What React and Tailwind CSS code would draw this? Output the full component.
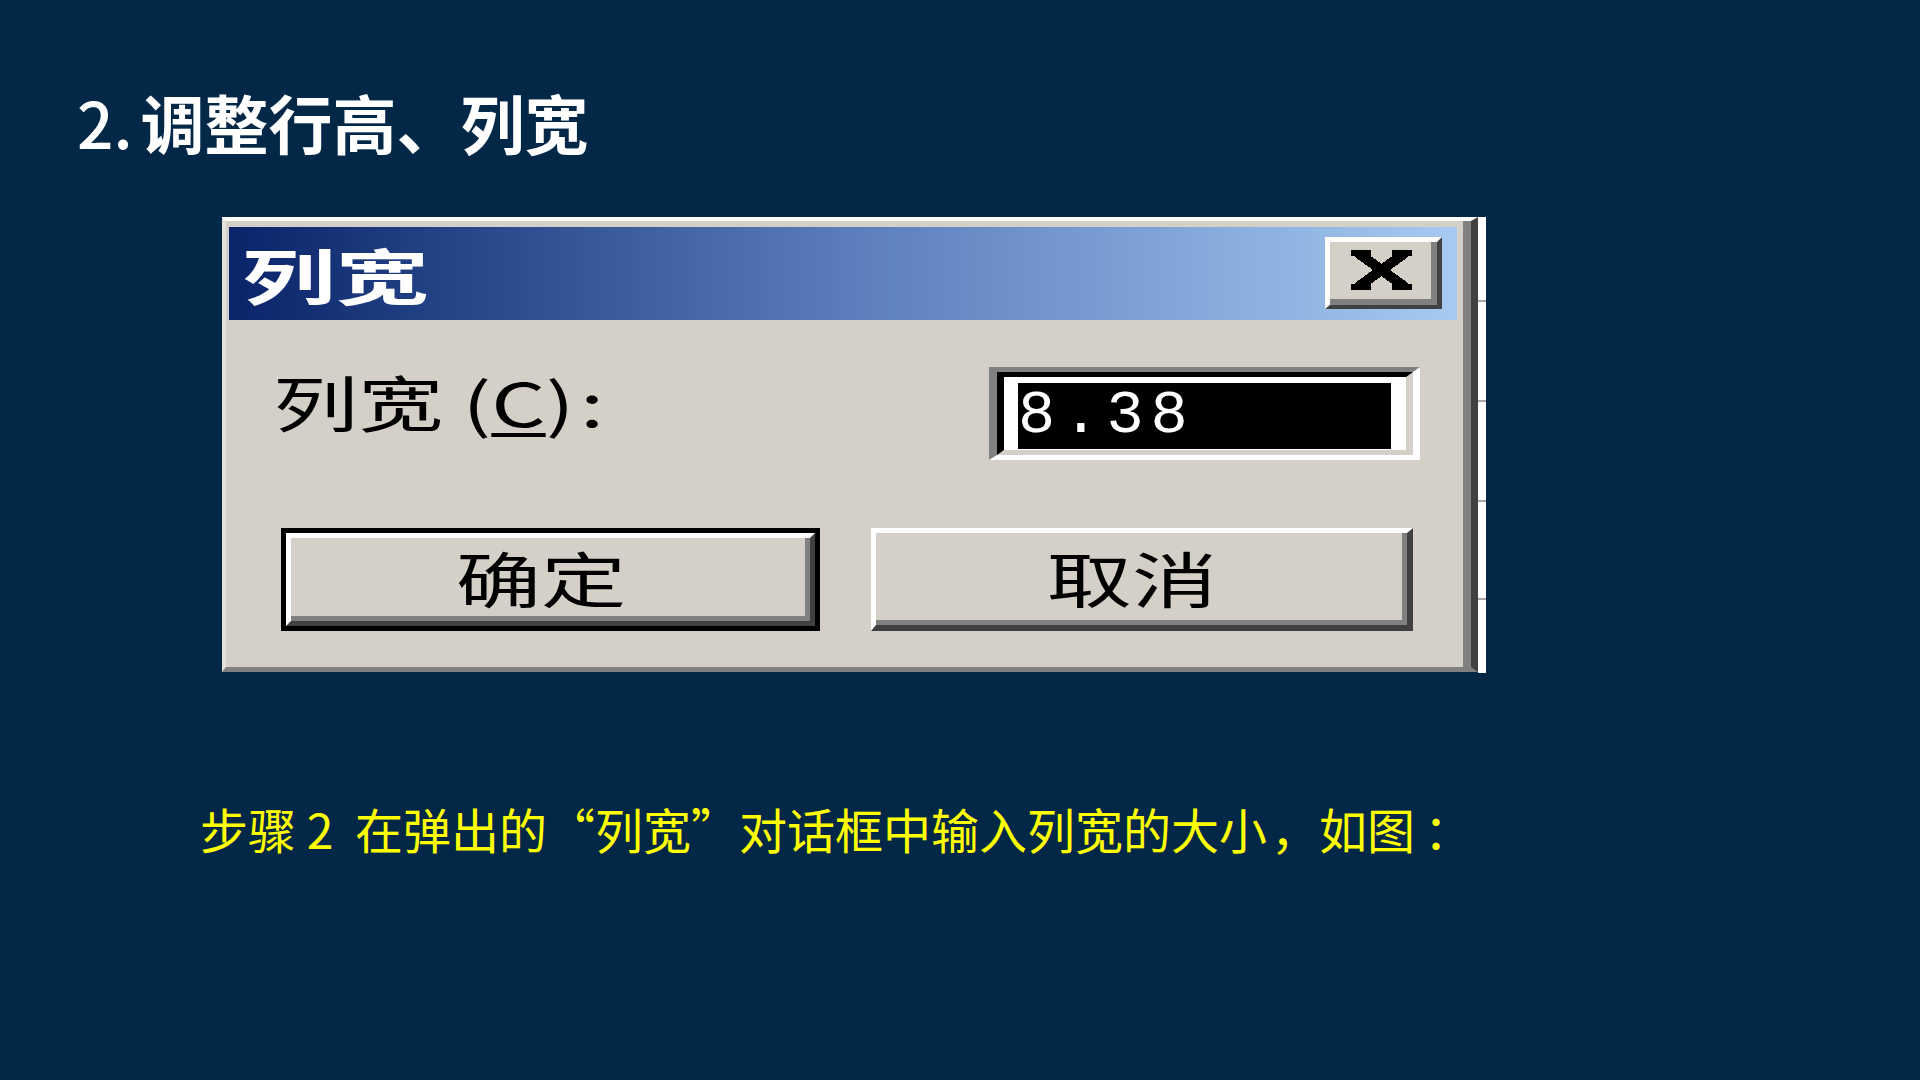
import React from 'react';

const CloseGlyph = () => (
  <svg width="61" height="40" viewBox="0 0 61 40" shapeRendering="crispEdges">
    <path d="M7 3 L54 37 M54 3 L7 37" stroke="#000" strokeWidth="10" fill="none" />
    <rect x="0" y="0" width="20" height="6" fill="#000" />
    <rect x="41" y="0" width="20" height="6" fill="#000" />
    <rect x="0" y="34" width="20" height="6" fill="#000" />
    <rect x="41" y="34" width="20" height="6" fill="#000" />
  </svg>
);

const App = () => {
  return (
    <div
      lang="zh-CN"
      className="w-[1920px] h-[1080px] bg-[#022747] flex flex-col font-['Noto_Sans_CJK_SC',sans-serif] overflow-hidden"
    >
      {/* slide title */}
      <div className="pt-[89px] pl-[77px] flex items-start text-white font-bold text-[64px] leading-none">
        <span className="font-medium">2.</span>
        <span className="ml-[8px]">调整行高、列宽</span>
      </div>

      {/* dialog screenshot */}
      <div className="mt-[64px] ml-[222px] flex">
        <div className="w-[1256px] h-[455px] bg-[#d4d0c8] border-t-4 border-l-4 border-r-[7px] border-b-[5px] border-t-white border-l-[#e4e1db] border-r-[#404040] border-b-[#808080]">
          <div className="h-full border-r-8 border-r-[#808080] pt-[6px] pl-[3px] pr-[6px] flex flex-col">
            {/* title bar */}
            <div className="h-[93px] bg-gradient-to-r from-[#0a246a] via-[#5a7cbc] to-[#a6caf0] flex items-center justify-between pl-[13px] pr-[15px]">
              <span className="inline-block origin-left scale-x-[1.56] text-white font-bold text-[60px] leading-none">
                列宽
              </span>
              <div className="w-[117px] h-[72px] mb-[2px] border-t-[5px] border-l-[5px] border-r-[5px] border-b-[4px] border-t-white border-l-white border-r-[#404040] border-b-[#404040]">
                <div className="w-full h-full bg-[#d4d0c8] border-r-[6px] border-b-[6px] border-[#808080] flex items-center justify-center pl-[2px]">
                  <CloseGlyph />
                </div>
              </div>
            </div>

            {/* label + input */}
            <div className="mt-[47px] flex items-start justify-between pl-[44px] pr-[37px]">
              <span className="mt-[4px] inline-block origin-left scale-x-[1.42] text-black text-[60px] leading-none">
                列宽 (<span className="underline underline-offset-[6px] decoration-[4px]">C</span>)<span className="ml-[4px]">:</span>
              </span>
              <div className="w-[431px] h-[93px] border-t-[5px] border-l-8 border-b-[5px] border-r-[7px] border-t-[#808080] border-l-[#808080] border-b-white border-r-white">
                <div className="w-full h-full border-t-[5px] border-l-[7px] border-b-[5px] border-r-[7px] border-t-black border-l-black border-b-[#d4d0c8] border-r-[#d4d0c8]">
                  <div className="w-full h-full bg-white pt-[6px] pl-[14px] pr-[15px] pb-[1px]">
                    <div className="w-full h-full bg-black flex items-center">
                      <span className="text-white font-['Liberation_Mono',monospace] text-[62px] leading-none tracking-[7px]">
                        8.38
                      </span>
                    </div>
                  </div>
                </div>
              </div>
            </div>

            {/* buttons */}
            <div className="mt-[68px] flex pl-[52px] pr-[44px] justify-between">
              <div className="w-[539px] h-[103px] border-[5px] border-black">
                <div className="w-full h-full border-[5px] border-t-white border-l-white border-r-[#404040] border-b-[#404040]">
                  <div className="w-full h-full border-r-[5px] border-b-[5px] border-[#808080] flex items-center justify-center pr-[14px]">
                    <span className="inline-block scale-x-[1.42] text-black text-[60px] leading-none">确定</span>
                  </div>
                </div>
              </div>
              <div className="w-[542px] h-[103px] border-t-[5px] border-l-[5px] border-r-[6px] border-b-[6px] border-t-white border-l-white border-r-[#404040] border-b-[#404040]">
                <div className="w-full h-full border-r-[5px] border-b-[5px] border-[#808080] flex items-center justify-center pr-[14px]">
                  <span className="inline-block scale-x-[1.42] text-black text-[60px] leading-none">取消</span>
                </div>
              </div>
            </div>
          </div>
        </div>

        {/* sliver of the sheet behind the dialog */}
        <div className="w-[8px] h-[456px] bg-white flex flex-col">
          <div className="mt-[83px] h-[2px] bg-[#a8a8a8]" />
          <div className="mt-[98px] h-[2px] bg-[#a8a8a8]" />
          <div className="mt-[98px] h-[2px] bg-[#a8a8a8]" />
          <div className="mt-[96px] h-[2px] bg-[#a8a8a8]" />
        </div>
      </div>

      {/* caption */}
      <div className="mt-[131px] pl-[200px] text-[#ffff00] text-[48px] leading-none whitespace-pre">
        步骤 2  在弹出的“列宽”对话框中输入列宽的大小<span className="ml-[4px]">，</span>如图<span className="ml-[9px]">：</span>
      </div>
    </div>
  );
};

export default App;
